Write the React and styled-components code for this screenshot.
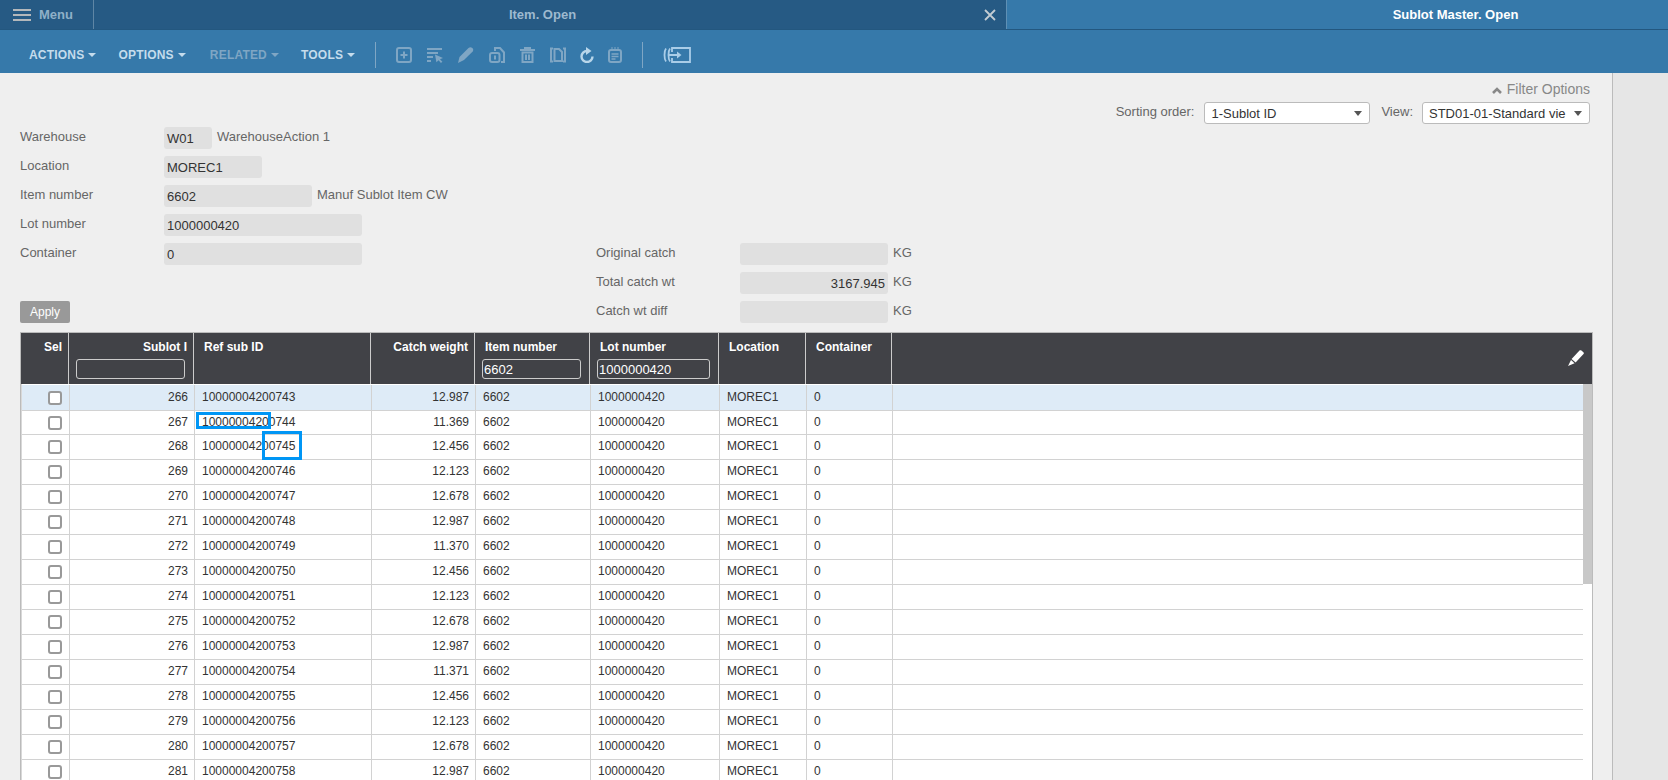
import React from "react";
import styled, { createGlobalStyle } from "styled-components";

const GlobalStyle = createGlobalStyle`
	html, body {
		margin: 0;
		height: 100%;
		overflow: hidden;
		background: #efefef;
		font-family: "Liberation Sans", Arial, sans-serif;
	}
`;

const COLUMNS = "48px 125px 177px 104px 115px 129px 87px 86px 1fr";
const WEIGHTS = [12.987, 11.369, 12.456, 12.123, 12.678, 12.987, 11.37, 12.456, 12.123, 12.678, 12.987, 11.371, 12.456, 12.123, 12.678, 12.987];

const rows = WEIGHTS.map((weight, index) => ({
	id: 266 + index,
	ref: `${10000004200743 + index}`,
	weight: weight.toFixed(3),
}));

const Page = styled.div`
	height: 780px;
	overflow: hidden;
	display: flex;
	flex-direction: column;
`;

const TabBar = styled.div`
	height: 29px;
	display: flex;
	background: #265a84;
	border-bottom: 1px solid #23577f;
`;

const MenuTab = styled.div`
	width: 94px;
	display: flex;
	align-items: center;
	gap: 8px;
	padding-left: 13px;
	box-sizing: border-box;
	border-right: 1px solid #5f86a5;
	color: #8fb0c8;
	font-size: 13px;
	font-weight: bold;
`;

const Burger = styled.span`
	width: 18px;
	height: 12px;
	border-top: 2px solid #b4b8bb;
	border-bottom: 2px solid #b4b8bb;
	box-sizing: border-box;
	position: relative;
	&::after {
		content: "";
		position: absolute;
		left: 0;
		right: 0;
		top: 3px;
		height: 2px;
		background: #b4b8bb;
	}
`;

const Tab = styled.div`
	width: 912px;
	display: flex;
	align-items: center;
	padding-right: 10px;
	box-sizing: border-box;
	color: #9db9cf;
	font-size: 13px;
	font-weight: bold;
`;

const TabTitle = styled.span`
	flex: 1;
	padding-left: 7px;
	text-align: center;
`;

const ActiveTab = styled.div`
	flex: 1;
	display: flex;
	align-items: center;
	justify-content: center;
	padding-left: 236px;
	background: #3679aa;
	border-left: 1px solid #5f90b5;
	color: #fff;
	font-size: 13px;
	font-weight: bold;
`;

const Toolbar = styled.div`
	height: 43px;
	box-sizing: border-box;
	display: flex;
	align-items: center;
	padding: 7px 0 0 29px;
	background: #3679aa;
`;

const ToolMenu = styled.span`
	display: flex;
	align-items: center;
	gap: 4px;
	margin-right: ${(p) => p.$gap}px;
	color: ${(p) => (p.$disabled ? "#7fa6c4" : "#c5dcec")};
	font-size: 12px;
	font-weight: bold;
	letter-spacing: 0.2px;
	&::after {
		content: "";
		border-left: 4px solid transparent;
		border-right: 4px solid transparent;
		border-top: 4px solid currentColor;
	}
`;

const ToolDivider = styled.span`
	width: 1px;
	height: 26px;
	background: #7fa6c4;
	margin: 0 20px;
`;

const ToolIcon = styled.svg`
	width: ${(p) => p.$width || 16}px;
	height: 16px;
	margin-right: ${(p) => p.$gap ?? 15}px;
	flex: none;
	fill: none;
	stroke: ${(p) => (p.$bright ? "#b8d6ea" : "#7fa6c4")};
	stroke-width: 2;
`;

const WideIcon = styled.svg`
	width: 28px;
	height: 16px;
	fill: none;
	stroke: #a9cde8;
	stroke-width: 1.8;
`;

const Body = styled.div`
	flex: 1;
	display: flex;
	min-height: 0;
`;

const Main = styled.div`
	width: 1612px;
	box-sizing: border-box;
	padding: 7px 22px 0 20px;
`;

const SidePanel = styled.div`
	flex: 1;
	background: #e6e6e6;
	border-left: 1px solid #bbb;
`;

const FilterToggle = styled.div`
	display: flex;
	justify-content: flex-end;
	align-items: center;
	gap: 5px;
	height: 18px;
	color: #888;
	font-size: 14px;
`;

const Chevron = styled.svg`
	width: 10px;
	height: 7px;
	margin-top: 2px;
	fill: none;
	stroke: #888;
	stroke-width: 2.6;
`;

const SortBar = styled.div`
	display: flex;
	justify-content: flex-end;
	align-items: center;
	margin-top: 4px;
	height: 22px;
	color: #666;
	font-size: 13px;
`;

const SortLabel = styled.span`
	margin: -3px ${(p) => p.$right}px 0 ${(p) => p.$left || 0}px;
`;

const Select = styled.div`
	width: ${(p) => p.$width}px;
	height: 22px;
	box-sizing: border-box;
	display: flex;
	align-items: center;
	justify-content: space-between;
	padding: 0 7px 0 6px;
	background: #fff;
	border: 1px solid #bbb;
	border-radius: 3px;
	color: #333;
	font-size: 13px;
	white-space: nowrap;
	overflow: hidden;
	&::after {
		content: "";
		flex: none;
		border-left: 4px solid transparent;
		border-right: 4px solid transparent;
		border-top: 5px solid #555;
	}
`;

const Form = styled.div`
	display: flex;
	margin-top: 3px;
`;

const FormColumn = styled.div`
	width: ${(p) => p.$width}px;
	padding-top: ${(p) => p.$top || 0}px;
	display: flex;
	flex-direction: column;
	gap: 7px;
`;

const Field = styled.div`
	display: flex;
	height: 22px;
`;

const FieldLabel = styled.span`
	flex: none;
	width: 144px;
	color: #666;
	font-size: 13px;
	line-height: 19px;
`;

const Value = styled.div`
	flex: none;
	width: ${(p) => p.$width}px;
	height: 22px;
	box-sizing: border-box;
	padding: 0 3px;
	background: #e0e0e0;
	border-radius: 3px;
	color: #333;
	font-size: 13px;
	line-height: 23px;
	text-align: ${(p) => (p.$right ? "right" : "left")};
`;

const FieldNote = styled.span`
	margin-left: 5px;
	color: #666;
	font-size: 13px;
	line-height: 19px;
`;

const ApplyButton = styled.div`
	width: 50px;
	height: 22px;
	margin-top: 29px;
	background: #999;
	border-radius: 2px;
	color: #fff;
	font-size: 12px;
	line-height: 22px;
	text-align: center;
`;

const Table = styled.div`
	margin: 9px -3px 0 0;
	border: 1px solid #bbb;
	background: #fff;
`;

const HeaderRow = styled.div`
	display: grid;
	grid-template-columns: ${COLUMNS};
	height: 51px;
	background: #414247;
	color: #fff;
	font-size: 12px;
	font-weight: bold;
`;

const HeaderCell = styled.div`
	position: relative;
	box-sizing: border-box;
	padding: 7px ${(p) => (p.$right ? 6 : 0)}px 0 ${(p) => p.$pad ?? 10}px;
	border-right: 1px solid ${(p) => (p.$last ? "transparent" : "#ccc")};
	text-align: ${(p) => (p.$right ? "right" : "left")};
	overflow: hidden;
	white-space: nowrap;
`;

const HeaderInput = styled.input`
	display: block;
	width: ${(p) => p.$width}px;
	height: 20px;
	box-sizing: border-box;
	margin: 5px 0 0 ${(p) => p.$left || 0}px;
	padding: 0 1px;
	background: transparent;
	border: 1px solid #ccc;
	border-radius: 3px;
	outline: none;
	color: #fff;
	font-family: inherit;
	font-size: 13px;
`;

const EditIcon = styled.svg`
	position: absolute;
	right: 7px;
	top: 17px;
	width: 16px;
	height: 16px;
	fill: #fff;
`;

const TableBody = styled.div`
	display: flex;
	padding-left: 1px;
	box-shadow: inset 1px 0 0 #d8d8d8;
`;

const Rows = styled.div`
	flex: 1;
	min-width: 0;
	padding-top: 1px;
`;

const Row = styled.div`
	display: grid;
	grid-template-columns: ${COLUMNS};
	height: ${(p) => p.$height}px;
	box-sizing: border-box;
	background: ${(p) => (p.$selected ? "#deebf7" : "#fff")};
	border-bottom: 1px solid #d2d2d2;
	color: #333;
	font-size: 12px;
`;

const Cell = styled.div`
	position: relative;
	display: flex;
	align-items: center;
	justify-content: ${(p) => (p.$right ? "flex-end" : "flex-start")};
	box-sizing: border-box;
	padding: 0 6px 2px 7px;
	border-right: 1px solid ${(p) => (p.$last ? "transparent" : "#d2d2d2")};
`;

const CheckCell = styled(Cell)`
	padding: 0 7px 0 0;
`;

const Checkbox = styled.span`
	width: 14px;
	height: 14px;
	box-sizing: border-box;
	border: 2px solid #999;
	border-radius: 3px;
	background: #fff;
`;

const Callout = styled.span`
	position: absolute;
	left: ${(p) => p.$left}px;
	top: ${(p) => p.$top}px;
	width: ${(p) => p.$width}px;
	height: ${(p) => p.$height}px;
	box-sizing: border-box;
	border: 3px solid #0096f5;
`;

const ScrollTrack = styled.div`
	width: 9px;
	flex: none;
	background: #fff;
`;

const ScrollThumb = styled.div`
	height: 200px;
	background: #c8c8c8;
`;

const CALLOUTS = {
	267: { $left: 1, $top: 1, $width: 75, $height: 17 },
	268: { $left: 67, $top: -4, $width: 40, $height: 29 },
};

function rowHeight(index) {
	if (index === 0) return 26;
	if (index === 1) return 24;
	return 25;
}

const Icon = ({ bright, width, gap, children }) => (
	<ToolIcon viewBox={`0 0 ${width || 16} 16`} $bright={bright} $width={width} $gap={gap}>
		{children}
	</ToolIcon>
);

function FormField({ label, value, width, note, right }) {
	return (
		<Field>
			<FieldLabel>{label}</FieldLabel>
			<Value $width={width} $right={right}>{value}</Value>
			{note && <FieldNote>{note}</FieldNote>}
		</Field>
	);
}

export default function App() {
	return (
		<Page>
			<GlobalStyle />
			<TabBar>
				<MenuTab>
					<Burger />
					Menu
				</MenuTab>
				<Tab>
					<TabTitle>Item. Open</TabTitle>
					<svg width="12" height="12" viewBox="0 0 12 12" stroke="#c3ccd3" strokeWidth="1.8">
						<path d="M1 1l10 10M11 1L1 11" />
					</svg>
				</Tab>
				<ActiveTab>Sublot Master. Open</ActiveTab>
			</TabBar>
			<Toolbar>
				<ToolMenu $gap={22}>ACTIONS</ToolMenu>
				<ToolMenu $gap={24}>OPTIONS</ToolMenu>
				<ToolMenu $gap={22} $disabled>RELATED</ToolMenu>
				<ToolMenu $gap={0}>TOOLS</ToolMenu>
				<ToolDivider />
				<Icon>
					<rect x="1" y="1" width="14" height="14" rx="2" />
					<path d="M8 4.5v7M4.5 8h7" />
				</Icon>
				<Icon>
					<path d="M0 2h15M0 6h11M0 10h6M0 14h4" />
					<path d="M8 7.5l8 3.5-3 1.2 2.4 2.6-1.5 1.2-2.3-2.8-2.2 2z" fill="#7fa6c4" stroke="none" />
				</Icon>
				<Icon>
					<path d="M0 16l1.5-6L10.5 1c1.2-1 2.6-1 3.8 0s1.2 2.4.4 3.4L6 13z" fill="#7fa6c4" stroke="none" />
				</Icon>
				<Icon>
					<path d="M6 4V1h5l4 4.5V15h-3" />
					<rect x="1" y="6" width="9.5" height="9" rx="2" />
					<path d="M6 8.5v4" />
				</Icon>
				<Icon width={15}>
					<path d="M0 3h15M5 3V1h5v2" />
					<path d="M2.5 5.5h10V15h-10zM6 7.5V13M9 7.5V13" />
				</Icon>
				<Icon gap={14}>
					<path d="M3 1.5H1v13h2M13 1.5h2v13h-2" />
					<path d="M4.5 2h4.5l3 3v9H4.5z" />
				</Icon>
				<Icon bright width={14} gap={14}>
					<path d="M12.5 9.5A5.5 5.5 0 1 1 7 4" strokeWidth="2.4" />
					<path d="M6 0l5.5 4L6 8z" fill="#b8d6ea" stroke="none" />
				</Icon>
				<Icon width={14} gap={0}>
					<rect x="1" y="3" width="12" height="12" rx="2" />
					<path d="M4 0v3M7 0v3M10 0v3" strokeWidth="1" />
					<path d="M3.5 7h7M3.5 9.5h7M3.5 12h4" strokeWidth="1.3" />
				</Icon>
				<ToolDivider />
				<WideIcon viewBox="0 0 28 16">
					<path d="M3 1.5C1 4 1 12 3 14.5M7 1.5C5 4 5 12 7 14.5" />
					<path d="M9 5V1h18v14H9v-4" />
					<path d="M6 8h11" strokeWidth="2" />
					<path d="M14 4.5L18.5 8 14 11.5z" fill="#a9cde8" stroke="none" />
				</WideIcon>
			</Toolbar>
			<Body>
				<Main>
					<FilterToggle>
						<Chevron viewBox="0 0 10 7">
							<path d="M1 6l4-4 4 4" />
						</Chevron>
						Filter Options
					</FilterToggle>
					<SortBar>
						<SortLabel $right={10}>Sorting order:</SortLabel>
						<Select $width={166}>1-Sublot ID</Select>
						<SortLabel $left={11} $right={9}>View:</SortLabel>
						<Select $width={168}>
							<span>STD01-01-Standard vie</span>
						</Select>
					</SortBar>
					<Form>
						<FormColumn $width={576}>
							<FormField label="Warehouse" value="W01" width={48} note="WarehouseAction 1" />
							<FormField label="Location" value="MOREC1" width={98} />
							<FormField label="Item number" value="6602" width={148} note="Manuf Sublot Item CW" />
							<FormField label="Lot number" value="1000000420" width={198} />
							<FormField label="Container" value="0" width={198} />
							<ApplyButton>Apply</ApplyButton>
						</FormColumn>
						<FormColumn $width={320} $top={116}>
							<FormField label="Original catch" value="" width={148} note="KG" />
							<FormField label="Total catch wt" value="3167.945" width={148} note="KG" right />
							<FormField label="Catch wt diff" value="" width={148} note="KG" />
						</FormColumn>
					</Form>
					<Table>
						<HeaderRow>
							<HeaderCell $right $pad={0}>Sel</HeaderCell>
							<HeaderCell $right $pad={0}>
								Sublot I
								<HeaderInput readOnly value="" $width={109} $left={7} />
							</HeaderCell>
							<HeaderCell>Ref sub ID</HeaderCell>
							<HeaderCell $right $pad={0}>Catch weight</HeaderCell>
							<HeaderCell>
								Item number
								<HeaderInput readOnly value="6602" $width={99} $left={-3} />
							</HeaderCell>
							<HeaderCell>
								Lot number
								<HeaderInput readOnly value="1000000420" $width={113} $left={-3} />
							</HeaderCell>
							<HeaderCell>Location</HeaderCell>
							<HeaderCell>Container</HeaderCell>
							<HeaderCell $last>
								<EditIcon viewBox="0 0 16 16">
									<path d="M11.5.6c.6-.5 1.3-.5 1.9 0l2 1.6c.6.5.6 1.3.1 1.9L7.6 12.6 3.6 9zM3 10l3.6 3.3L0 16z" />
								</EditIcon>
							</HeaderCell>
						</HeaderRow>
						<TableBody>
							<Rows>
								{rows.map((row, index) => (
									<Row key={row.id} $selected={index === 0} $height={rowHeight(index)}>
										<CheckCell $right><Checkbox /></CheckCell>
										<Cell $right>{row.id}</Cell>
										<Cell>
											{row.ref}
											{CALLOUTS[row.id] && <Callout {...CALLOUTS[row.id]} />}
										</Cell>
										<Cell $right>{row.weight}</Cell>
										<Cell>6602</Cell>
										<Cell>1000000420</Cell>
										<Cell>MOREC1</Cell>
										<Cell>0</Cell>
										<Cell $last />
									</Row>
								))}
							</Rows>
							<ScrollTrack>
								<ScrollThumb />
							</ScrollTrack>
						</TableBody>
					</Table>
				</Main>
				<SidePanel />
			</Body>
		</Page>
	);
}
